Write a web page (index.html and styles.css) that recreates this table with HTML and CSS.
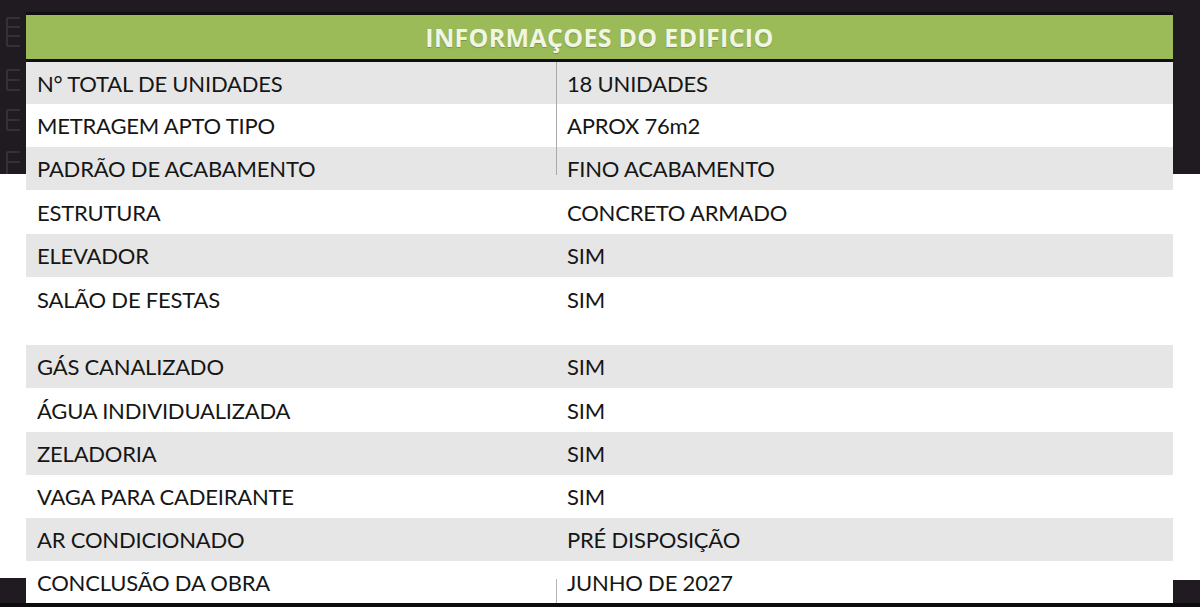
FILE: index.html
```html
<!DOCTYPE html>
<html lang="pt-BR">
<head>
<meta charset="utf-8">
<title>Informações do Edifício</title>
<link rel="stylesheet" href="styles.css">
</head>
<body>
<div class="page">
  <div class="side-strip">
    <svg class="side-marks" width="26" height="162" viewBox="0 0 26 162" aria-hidden="true">
      <g fill="none" stroke="#343035" stroke-width="2">
        <path d="M7 6 H20 M7 6 V34 M7 15 H20 M7 24 H20 M7 34 H20"/>
        <path d="M7 58 H20 M7 58 V78 M7 68 H20 M7 78 H20"/>
        <path d="M7 98 H20 M7 98 V118 M7 108 H20 M7 118 H20"/>
        <path d="M7 140 H20 M7 140 V162 M7 150 H20"/>
      </g>
    </svg>
  </div>
  <div class="sheet">
    <div class="head">INFORMAÇOES DO EDIFICIO</div>
    <div class="row grey first"><div class="lbl">N° TOTAL DE UNIDADES</div><div class="val line-full">18 UNIDADES</div></div>
    <div class="row"><div class="lbl">METRAGEM APTO TIPO</div><div class="val line-full">APROX 76m2</div></div>
    <div class="row grey"><div class="lbl">PADRÃO DE ACABAMENTO</div><div class="val line-top">FINO ACABAMENTO</div></div>
    <div class="row h44"><div class="lbl">ESTRUTURA</div><div class="val">CONCRETO ARMADO</div></div>
    <div class="row grey"><div class="lbl">ELEVADOR</div><div class="val">SIM</div></div>
    <div class="row tall"><div class="lbl">SALÃO DE FESTAS</div><div class="val">SIM</div></div>
    <div class="row grey"><div class="lbl">GÁS CANALIZADO</div><div class="val">SIM</div></div>
    <div class="row h44"><div class="lbl">ÁGUA INDIVIDUALIZADA</div><div class="val">SIM</div></div>
    <div class="row grey"><div class="lbl">ZELADORIA</div><div class="val">SIM</div></div>
    <div class="row"><div class="lbl">VAGA PARA CADEIRANTE</div><div class="val">SIM</div></div>
    <div class="row grey"><div class="lbl">AR CONDICIONADO</div><div class="val">PRÉ DISPOSIÇÃO</div></div>
    <div class="row last"><div class="lbl">CONCLUSÃO DA OBRA</div><div class="val line-bottom">JUNHO DE 2027</div></div>
  </div>
</div>
</body>
</html>
```
FILE: styles.css
```css
html, body {
  margin: 0;
  padding: 0;
}
body {
  width: 1200px;
  height: 607px;
  overflow: hidden;
  font-family: "Lato", "Open Sans", sans-serif;
  color: #161616;
  background:
    linear-gradient(#0c0c0c, #0c0c0c) left bottom / 100% 4px no-repeat,
    linear-gradient(#1f1b20, #1f1b20) left 578px / 26px 25px no-repeat,
    linear-gradient(#1f1b20, #1f1b20) right 580px / 27px 23px no-repeat,
    linear-gradient(#1f1b20, #1f1b20) left top / 100% 174px no-repeat,
    #ffffff;
}
.page {
  display: flex;
  padding-top: 12px;
}
.side-strip {
  width: 26px;
  height: 162px;
  overflow: hidden;
}
.side-marks {
  display: block;
}
.sheet {
  width: 1147px;
  display: flex;
  flex-direction: column;
}
.head {
  height: 44px;
  border-top: 3px solid #101010;
  border-bottom: 3px solid #101010;
  background: #9bbb59;
  color: #f1f6e4;
  font-family: "Open Sans", "Lato", sans-serif;
  font-weight: 700;
  font-size: 25px;
  letter-spacing: 0.3px;
  display: flex;
  align-items: center;
  justify-content: center;
  text-shadow: 0 1px 1px rgba(60, 80, 20, 0.35);
}
.row {
  display: grid;
  grid-template-columns: 530px 1fr;
  height: 43px;
  background: #ffffff;
}
.row.grey {
  background: #e6e6e6;
}
.row.first {
  height: 42px;
}
.row.h44 {
  height: 44px;
}
.row.tall {
  height: 68px;
}
.row.tall .lbl, .row.tall .val {
  align-items: flex-start;
  padding-top: 9px;
}
.row.last {
  height: 42px;
}
.lbl, .val {
  display: flex;
  align-items: center;
  font-size: 22px;
  letter-spacing: -0.2px;
  white-space: nowrap;
}
.lbl {
  padding-left: 11px;
}
.val {
  padding-left: 11px;
}
.line-full {
  background: linear-gradient(#a9a9a9, #a9a9a9) left top / 1px 100% no-repeat;
}
.line-top {
  background: linear-gradient(#a9a9a9, #a9a9a9) left top / 1px 28px no-repeat;
}
.line-bottom {
  background: linear-gradient(#b5b5b5, #b5b5b5) left bottom / 1px 24px no-repeat;
}
```
